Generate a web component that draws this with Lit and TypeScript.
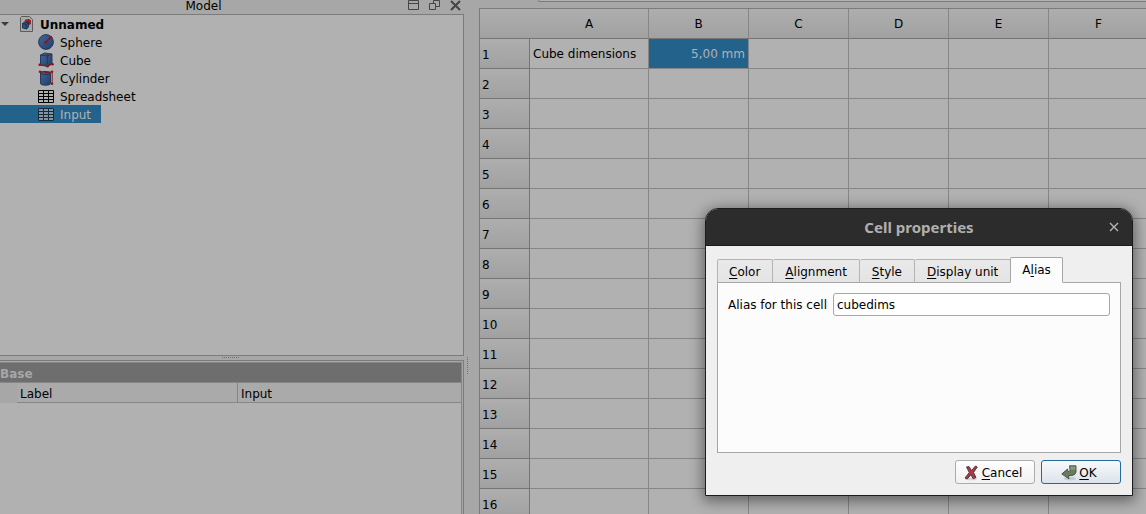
import { LitElement, html, css, svg, nothing } from "lit";
import { customElement, property, state } from "lit/decorators.js";
import { classMap } from "lit/directives/class-map.js";

const documentIcon = html`<svg width="13" height="16" viewBox="0 0 13 16" aria-hidden="true">
  <path d="M1.500.5h8l3 3v12h-12v-14z" fill="#a9a9a9" stroke="#5c5c5c"/>
  <path d="M4.500 5l1-1.500L9 3l2 1.500V8L9 9z" fill="#9c1a20"/>
  <path d="M2.500 7.500l2-1.500 4 .6v4.600l-2 1.800-4-1z" fill="#2b517f" stroke="#142a48" stroke-width=".8"/>
  <path d="M2.500 7.500l3.800.8 2.200-1.700M6.300 8.300V13" fill="none" stroke="#142a48" stroke-width=".7"/>
</svg>`;

const defs = (id: string) => svg`<defs><linearGradient id=${id} x1="0" y1="0" x2="1" y2="1">
  <stop offset="0" stop-color="#40679a"/><stop offset="1" stop-color="#213f69"/></linearGradient></defs>`;

const icons: Record<string, unknown> = {
  Sphere: html`<svg width="16" height="16" viewBox="0 0 16 16" aria-hidden="true">${defs("s")}
    <circle cx="8" cy="8" r="7.400" fill="url(#s)" stroke="#1b3354" stroke-width=".9"/>
    <path d="M8 8L12.500 3.500" stroke="#84151c" stroke-width="1.300"/>
    <circle cx="7.800" cy="8.200" r="1.500" fill="#8c171d"/><circle cx="12.800" cy="3.200" r="1.500" fill="#8c171d"/></svg>`,
  Cube: html`<svg width="16" height="16" viewBox="0 0 16 16" aria-hidden="true">${defs("c")}
    <path d="M2.500 3L6.500 1l7.500 1v10L9.500 14.500l-7-1.500z" fill="url(#c)" stroke="#1b3354" stroke-width=".9"/>
    <path d="M2.500 3L9.500 4L14 2" fill="none" stroke="#1b3354" stroke-width=".9"/>
    <path d="M9.500 4v8M1.500 13L9.500 13.500 14.500 12" fill="none" stroke="#84151c"/>
    <circle cx="9.500" cy="3.500" r="1.300" fill="#8c171d"/><circle cx="9.500" cy="14" r="1.500" fill="#8c171d"/>
    <circle cx="1.700" cy="12.800" r="1.300" fill="#8c171d"/><circle cx="14.500" cy="12.200" r="1.300" fill="#8c171d"/></svg>`,
  Cylinder: html`<svg width="16" height="16" viewBox="0 0 16 16" aria-hidden="true">${defs("y")}
    <path d="M2.500 3c0-2 10-2 10 0v10.500c0 2.300-10 2.300-10 0z" fill="url(#y)" stroke="#1b3354" stroke-width=".9"/>
    <path d="M2.500 3c0 2 10 2 10 0" fill="none" stroke="#1b3354" stroke-width=".9"/>
    <path d="M2 1.800h6M14.200 2v11.500M8 2.500L14 2" stroke="#84151c"/>
    <circle cx="2" cy="1.800" r="1.300" fill="#8c171d"/><circle cx="8" cy="2.300" r="1.300" fill="#8c171d"/>
    <circle cx="14" cy="1.800" r="1.300" fill="#8c171d"/><circle cx="14" cy="13.800" r="1.300" fill="#8c171d"/></svg>`,
  Spreadsheet: html`<svg width="16" height="13" viewBox="0 0 16 13" aria-hidden="true">
    <path d="M.5.5h15v12H.5zM.5 3.500h15M.5 6.500h15M.5 9.500h15M5.500 0v13M10.500 0v13" fill="none" stroke="currentColor"/></svg>`,
};

@customElement("model-panel")
class ModelPanel extends LitElement {
  @state() private selected = "Input";

  static styles = css`
    :host { display: flex; flex-direction: column; height: 100%; min-width: 0; }
    button { font: inherit; color: inherit; background: none; border: 0; padding: 0; display: flex; align-items: center; }
    .title { display: flex; flex: none; height: 14px; align-items: center; justify-content: flex-end; gap: 8px; padding-right: 2px; overflow: hidden; }
    .title h2 { flex: 1; margin: 0 0 0 8px; font-size: 12px; font-weight: 400; line-height: 14px; text-align: center; height: 16px; }
    .tools { display: flex; gap: 8px; height: 13px; padding-bottom: 3px; }
    .tree { flex: none; border: 1px solid #7b7b7b; border-left: 0; background: #b1b1b1; height: 340px; }
    .tree ul { margin: 0; padding: 0; list-style: none; }
    .row { height: 18px; line-height: 16px; }
    .row span { padding-top: 2px; }
    .doc { font-weight: 700; padding-left: 1px; }
    .doc .arrow { display: flex; width: 19px; padding: 0; }
    .doc .label { padding-left: 7px; }
    .item { padding: 0 10px 0 38px; gap: 6px; }
    .item svg { width: 16px; }
    .selected { background: #22628b; color: #b2b2b2; }
    .selected svg { color: #122c3f; background: #8794a0; }
    .grip { flex: none; height: 4px; display: flex; justify-content: center; align-items: flex-start; }
    .grip i { width: 17px; margin: 1px 4px 0 0; border-top: 1px dotted #707070; }
    .props { flex: 1; border: 1px solid #7b7b7b; border-width: 1px 1px 0 0; padding: 1px 1px 0 0; background: #a7a7a7; }
    .view { height: 100%; background: #b1b1b1; border: 1px solid #868686; border-width: 1px 1px 0 0; box-sizing: border-box; }
    table { width: 100%; border-collapse: separate; border-spacing: 0; table-layout: fixed; }
    th, td { text-align: left; font-weight: 400; padding: 3px 0 0; height: 16px; line-height: 16px; }
    .group { background: #6e6e6e; color: #a7a7a7; font-weight: 700; border-bottom: 1px solid #868686; }
    .indent { width: 17px; background: #a7a7a7; }
    .name { width: 221px; background: #aaaaaa; border-right: 1px solid #868686; border-bottom: 1px solid #868686; padding-left: 3px; }
    .value { background: #aaaaaa; border-bottom: 1px solid #868686; padding-left: 3px; }
  `;

  render() {
    return html`
      <div class="title">
        <h2>Model</h2>
        <div class="tools">
          <button aria-label="Collapse"><svg width="13" height="13"><path d="M1.500 1.500h10v9h-10zM1.500 4.500h10" fill="none" stroke="#454545"/></svg></button>
          <button aria-label="Float"><svg width="13" height="13"><path d="M5.500 1.500h6v6h-6z" fill="none" stroke="#454545"/><path d="M1.500 4.500h6v6h-6z" fill="#a7a7a7" stroke="#454545"/></svg></button>
          <button aria-label="Close"><svg width="13" height="13"><path d="M2 2l9 9M11 2l-9 9" stroke="#454545" stroke-width="2"/></svg></button>
        </div>
      </div>
      <div class="tree">
        <button class="row doc"><span class="arrow"><svg width="8" height="5"><path d="M0 0h8l-4 4z" fill="#3c3c3c"/></svg></span>${documentIcon}<span class="label">Unnamed</span></button>
        <ul>
          ${["Sphere", "Cube", "Cylinder", "Spreadsheet", "Input"].map(
            (name) => html`<li><button class=${classMap({ row: true, item: true, selected: this.selected === name })}
              @click=${() => (this.selected = name)}>${icons[name] ?? icons.Spreadsheet}<span>${name}</span></button></li>`
          )}
        </ul>
      </div>
      <div class="grip"><i></i></div>
      <div class="props"><div class="view">
        <table>
          <colgroup><col class="indent"><col class="name"><col></colgroup>
          <tbody>
            <tr><th class="group" colspan="3">Base</th></tr>
            <tr><td class="indent"></td><th class="name" scope="row">Label</th><td class="value">Input</td></tr>
          </tbody>
        </table>
      </div></div>
    `;
  }
}

@customElement("sheet-view")
class SheetView extends LitElement {
  static styles = css`
    :host { display: block; overflow: hidden; height: 100%; }
    .bar { height: 1px; margin-left: 59px; border-bottom: 1px solid #7b7b7b; border-left: 1px solid #7b7b7b; border-bottom-left-radius: 3px; background: #b1b1b1; }
    .frame { margin-top: 6px; border-left: 1px solid #7b7b7b; border-top: 1px solid #7b7b7b; }
    table { width: 669px; table-layout: fixed; border-collapse: separate; border-spacing: 0; background: #b1b1b1; }
    th, td { box-sizing: border-box; height: 30px; padding: 0 3px; line-height: 16px; border-right: 1px solid #868686; border-bottom: 1px solid #868686; white-space: nowrap; }
    th { font-weight: 400; background: linear-gradient(#aeaeae, #a1a1a1); border-bottom-color: #757575; }
    tbody th { text-align: left; padding: 2px 3px 0 2px; border-right-color: #757575; }
    .row { width: 50px; }
    .wide { width: 119px; }
    .corner { border-right: 0; }
    .amount { background: #22628b; color: #b2b2b2; text-align: right; }
  `;

  render() {
    const columns = ["A", "B", "C", "D", "E", "F"];
    const rows = Array.from({ length: 16 }, (_, i) => i + 1);
    const text = (column: string, row: number) =>
      row !== 1 ? nothing : column === "A" ? "Cube dimensions" : column === "B" ? "5,00 mm" : nothing;
    return html`
      <div class="bar"></div>
      <div class="frame"><table>
        <colgroup><col class="row"><col class="wide"></colgroup>
        <thead><tr><th class="row corner"></th>${columns.map((c) => html`<th class=${c === "A" ? "wide" : ""} scope="col">${c}</th>`)}</tr></thead>
        <tbody>${rows.map((r) => html`<tr><th scope="row">${r}</th>${columns.map(
          (c) => html`<td class=${r === 1 && c === "B" ? "amount" : ""}>${text(c, r)}</td>`)}</tr>`)}</tbody>
      </table></div>
    `;
  }
}

@customElement("cell-properties")
class CellProperties extends LitElement {
  @property() alias = "cubedims";
  @state() private tab = "Alias";

  static styles = css`
    :host { display: flex; flex-direction: column; box-sizing: border-box; border: 1px solid #1c1c1c; border-radius: 13px 13px 0 0; background: #efefef; color: #000; box-shadow: 0 3px 14px 2px rgba(0, 0, 0, 0.45); overflow: hidden; }
    button, input { font: inherit; color: inherit; }
    header { display: grid; grid-template-columns: 36px 1fr 36px; align-items: center; height: 36px; background: #2c2c2c; border-bottom: 1px solid #1c1c1c; color: #b0afac; }
    h1 { grid-column: 2; margin: 0; text-align: center; font: 700 15px/20px "Noto Sans", sans-serif; }
    .close { background: none; border: 0; padding: 0; display: flex; justify-content: center; }
    .body { padding: 11px; display: flex; flex-direction: column; }
    .tabs { display: flex; flex: none; align-items: flex-end; height: 26px; margin-bottom: -1px; position: relative; }
    .tab { height: 24px; box-sizing: border-box; padding: 1px 12px 0; border: 1px solid #b4b4b4; border-left-width: 0; border-bottom-color: #a6a6a6; border-radius: 2px 2px 0 0; background: linear-gradient(#e9e9e9, #e4e4e4); }
    .tab:first-child { border-left-width: 1px; padding-left: 11px; }
    .tab.active { height: 26px; background: #fcfcfc; border-color: #a6a6a6; border-bottom-color: #fcfcfc; border-left-width: 1px; margin-left: -1px; padding: 0 11px 0; }
    .pane { flex: none; border: 1px solid #a6a6a6; background: #fcfcfc; height: 169px; }
    .field { display: flex; align-items: center; gap: 6px; padding: 10px; }
    input { flex: 1; min-width: 0; height: 23px; box-sizing: border-box; border: 1px solid #a6a6a6; border-radius: 3px; padding: 0 3px; background: #fff; outline: none; }
    .actions { display: flex; justify-content: flex-end; gap: 6px; padding-top: 7px; }
    .action { display: flex; align-items: center; justify-content: center; gap: 2px; width: 80px; height: 24px; box-sizing: border-box; padding: 1px 4px 0 0; border: 1px solid #acacac; border-radius: 3px; background: linear-gradient(#fefefe, #f1f1f1); }
    .default { border-color: #1f6c9c; background: linear-gradient(#f8fafc, #dbe3ea); }
    u { text-underline-offset: 2px; text-decoration-thickness: 1px; }
  `;

  render() {
    const tabs = [["", "C", "olor"], ["", "A", "lignment"], ["", "S", "tyle"], ["", "D", "isplay unit"], ["A", "l", "ias"]];
    return html`
      <header>
        <h1>Cell properties</h1>
        <button class="close" aria-label="Close"><svg width="10" height="10"><path d="M1 1l8 8M9 1l-8 8" stroke="#b8b8b8" stroke-width="1.300"/></svg></button>
      </header>
      <div class="body">
        <div class="tabs" role="tablist">
          ${tabs.map(([before, key, after]) => {
            const name = before + key + after;
            return html`<button role="tab" aria-selected=${this.tab === name} class=${classMap({ tab: true, active: this.tab === name })}
              @click=${() => (this.tab = name)}>${before}<u>${key}</u>${after}</button>`;
          })}
        </div>
        <div class="pane" role="tabpanel">
          <div class="field">
            <label for="alias">Alias for this cell</label>
            <input id="alias" type="text" .value=${this.alias}>
          </div>
        </div>
        <div class="actions">
          <button class="action"><svg width="16" height="16" viewBox="0 0 16 16" aria-hidden="true">
            <ellipse cx="7" cy="14" rx="6" ry="1.300" fill="#000" opacity=".12"/>
            <path d="M2.500 2L5 1.500l2.500 4L11.500 1l1.800 1L9.500 7.500l2.500 5-2.800 1.300L7 9.800 3.200 14 1 13l4.300-5.500z" fill="#a43c49" stroke="#5a2831" stroke-width=".9"/></svg><span><u>C</u>ancel</span></button>
          <button class="action default"><svg width="16" height="16" viewBox="0 0 16 16" aria-hidden="true">
            <ellipse cx="9" cy="13.500" rx="6" ry="1.800" fill="#000" opacity=".12"/>
            <path d="M8.500.800h6.500v5.700c0 2.500-2 4-5 4L7.500 10.500 8 13.800.8 9 6.500 4l.5 2.500c1.500 0 2-.5 2-1.500z" fill="#6a7b5e" stroke="#43503b" stroke-width=".9"/>
            <path d="M9.500 1.600h4.800v3.200H9.500z" fill="#8a9a7d"/></svg><span><u>O</u>K</span></button>
        </div>
      </div>
    `;
  }
}

@customElement("app-root")
class AppRoot extends LitElement {
  static styles = css`
    :host { display: grid; grid-template-columns: 464px minmax(0, 1fr); gap: 15px; height: 100vh; overflow: hidden; position: relative; background: #a7a7a7; color: #000; font: 12px/16px "DejaVu Sans", sans-serif; }
    .window { position: absolute; left: 705px; top: 208px; width: 428px; }
    .splitter { position: absolute; left: 467px; top: 357px; height: 17px; border-left: 1px dotted #707070; }
  `;

  render() {
    return html`
      <model-panel></model-panel>
      <sheet-view></sheet-view>
      <i class="splitter"></i>
      <cell-properties class="window" role="dialog" aria-label="Cell properties"></cell-properties>
    `;
  }
}
